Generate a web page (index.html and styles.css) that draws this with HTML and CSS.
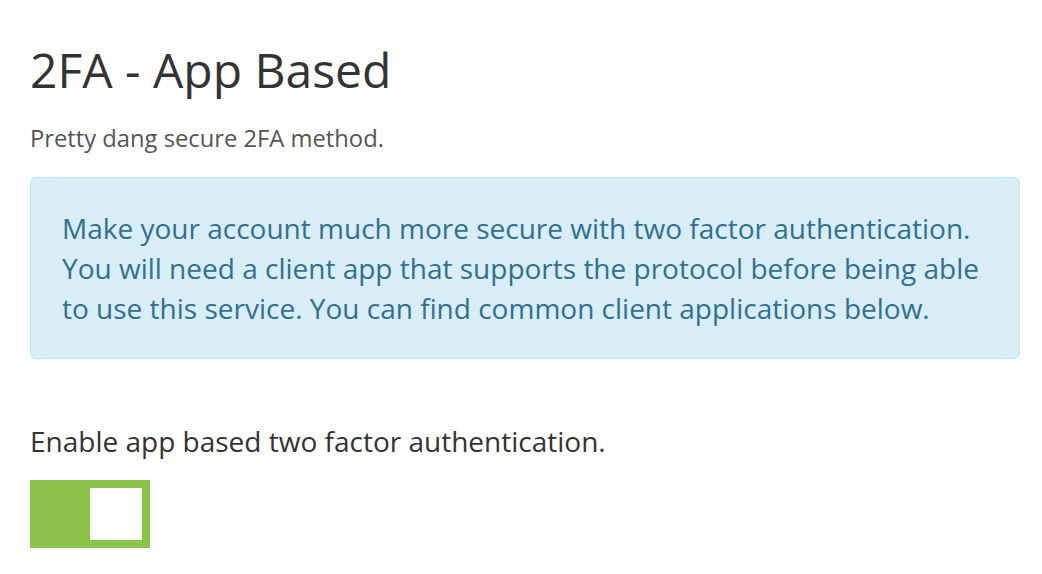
FILE: index.html
```html
<!DOCTYPE html>
<html lang="en">
<head>
    <meta charset="UTF-8">
    <meta name="viewport" content="width=device-width, initial-scale=1.0">
    <title>2FA - App Based</title>
    <link rel="stylesheet" href="styles.css">
</head>
<body>
    <div class="page">
        <h1 class="title">2FA - App Based</h1>
        <p class="subtitle">Pretty dang secure 2FA method.</p>
        <div class="alert-info">
            Make your account much more secure with two factor authentication.
            You will need a client app that supports the protocol before being able
            to use this service. You can find common client applications below.
        </div>
        <div class="setting">
            <p class="setting-label">Enable app based two factor authentication.</p>
            <label class="toggle">
                <input type="checkbox" checked>
                <span class="toggle-track"><span class="toggle-knob"></span></span>
            </label>
        </div>
    </div>
</body>
</html>
```

FILE: styles.css
```css
body {
    margin: 0;
    font-family: "Open Sans", Arial, sans-serif;
    background: #fff;
    color: #333;
}
.page {
    padding: 0 22px 0 30px;
}
.title {
    font-size: 48px;
    font-weight: 400;
    line-height: 56px;
    margin: 42px 0 0 0;
    color: #333;
}
.subtitle {
    font-size: 23.75px;
    line-height: 30px;
    margin: 25px 0 0 0;
    color: #555;
}
.alert-info {
    margin-top: 24px;
    padding: 30px 31px;
    background: #d9edf7;
    border: 1px solid #bce8f1;
    border-radius: 6px;
    color: #31708f;
    font-size: 28px;
    line-height: 40px;
}
.setting {
    margin-top: 64px;
}
.setting-label {
    font-size: 28px;
    line-height: 36px;
    margin: 0 0 21px 0;
    color: #333;
}
.toggle input {
    display: none;
}
.toggle-track {
    display: flex;
    justify-content: flex-end;
    width: 104px;
    height: 52px;
    padding: 8px;
    background: #8bc34a;
    cursor: pointer;
}
.toggle-knob {
    width: 52px;
    height: 52px;
    background: #fff;
}
```
